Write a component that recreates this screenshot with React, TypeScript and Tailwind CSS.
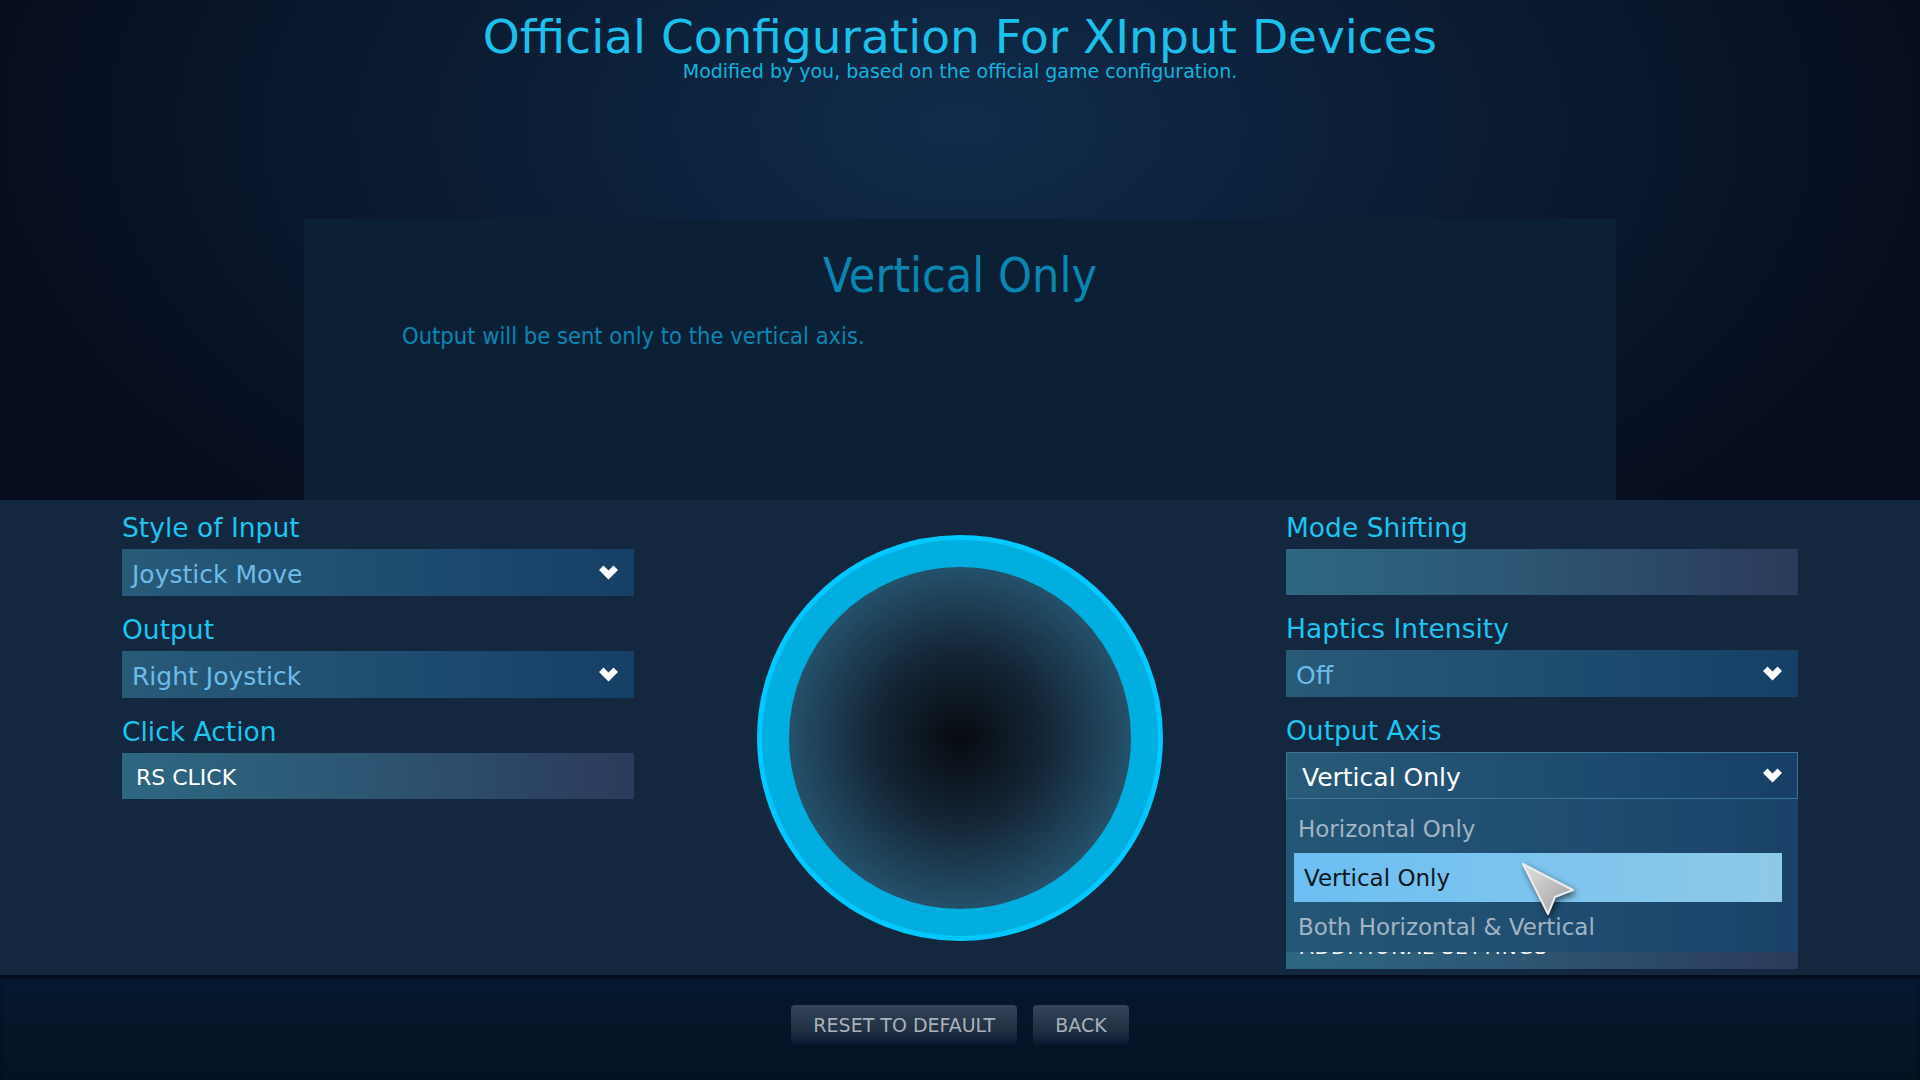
import React from 'react';

const sans = "font-['DejaVu_Sans',Verdana,sans-serif]";
const cond = "font-['DejaVu_Sans_Condensed','DejaVu_Sans',sans-serif]";

function Chevron() {
  return (
    <svg width="19" height="15" viewBox="0 0 19 15" className="shrink-0">
      <polygon points="0,5 4.5,0.5 9.5,5.5 14.5,0.5 19,5 9.5,14.5" fill="#ffffff" />
    </svg>
  );
}

function Cursor() {
  return (
    <svg width="60" height="60" viewBox="-4 -4 60 60" className="drop-shadow-[2px_3px_3px_rgba(0,0,0,0.6)]">
      <defs>
        <linearGradient id="cur" x1="0" y1="0" x2="1" y2="1">
          <stop offset="0" stopColor="#e2e2e2" />
          <stop offset="1" stopColor="#9c9c9c" />
        </linearGradient>
      </defs>
      <path d="M0 0 L50 26 L32 33 L25 50 Z" fill="url(#cur)" stroke="#ececec" strokeWidth="2" strokeLinejoin="round" />
    </svg>
  );
}

function Field({ label, first, children }: { label: string; first?: boolean; children: React.ReactNode }) {
  return (
    <div className={first ? 'flex flex-col' : 'flex flex-col mt-[21px]'}>
      <div className="h-[26px] text-[26.5px] leading-[26px] text-[#1dc5ef] mb-[8px]">{label}</div>
      {children}
    </div>
  );
}

function Select({ value, open }: { value: string; open?: boolean }) {
  return (
    <div
      className={
        open
          ? 'h-[47px] flex items-center justify-between pl-[15px] pr-[15px] border border-[#3a7797] bg-[linear-gradient(to_right,#295a78,#1d4b6f_60%,#173f66)]'
          : 'h-[47px] flex items-center justify-between pl-[10px] pr-[16px] bg-[linear-gradient(to_right,#295a78,#1d4b6f_60%,#163f66)]'
      }
    >
      <span className={open ? 'pt-[5px] text-[25px] text-white' : 'pt-[5px] text-[25px] text-[#6cbcea]'}>{value}</span>
      <Chevron />
    </div>
  );
}

function Plain({ value }: { value?: string }) {
  return (
    <div className="h-[46px] flex items-center pl-[14px] bg-[linear-gradient(to_right,#2d6781,#2d5774_45%,#2c3a5b)]">
      {value && <span className="pt-[2px] text-[22px] text-white">{value}</span>}
    </div>
  );
}

export default function App() {
  return (
    <div className={`${sans} w-[1920px] h-[1080px] flex flex-col overflow-hidden bg-[#13273e]`}>
      {/* Header + description */}
      <div className="h-[500px] flex flex-col items-center bg-[radial-gradient(ellipse_1000px_560px_at_50%_25%,#102c4b_0%,#0b1c33_50%,#070d1e_100%)]">
        <h1 className="pt-[13px] text-[47px] leading-[47px] text-[#1cc0ea]">Official Configuration For XInput Devices</h1>
        <p className="mt-[2px] text-[19px] leading-[19px] text-[#13b3dc]">
          Modified by you, based on the official game configuration.
        </p>
        <div className="mt-auto w-[1312px] h-[281px] bg-[#0b2035] flex flex-col pt-[32px]">
          <h2 className={`${cond} text-center text-[48px] leading-[48px] text-[#0a86b1]`}>Vertical Only</h2>
          <p className={`${cond} mt-[25px] pl-[98px] text-[23.5px] leading-[24px] text-[#0a86b1]`}>
            Output will be sent only to the vertical axis.
          </p>
        </div>
      </div>

      {/* Settings */}
      <div className="h-[475px] flex justify-between px-[122px] bg-[#13273e]">
        <div className="w-[512px] pt-[15px] flex flex-col">
          <Field label="Style of Input" first>
            <Select value="Joystick Move" />
          </Field>
          <Field label="Output">
            <Select value="Right Joystick" />
          </Field>
          <Field label="Click Action">
            <Plain value="RS CLICK" />
          </Field>
        </div>

        <div className="self-center w-[406px] h-[406px] rounded-full bg-[#00afdf] border-[5px] border-[#00c9ff] flex items-center justify-center">
          <div className="w-[342px] h-[342px] rounded-full bg-[radial-gradient(circle,#070b10_0%,#142536_35%,#24506a_70%,#30697f_100%)]" />
        </div>

        <div className="w-[512px] pt-[15px] flex flex-col">
          <Field label="Mode Shifting" first>
            <Plain />
          </Field>
          <Field label="Haptics Intensity">
            <Select value="Off" />
          </Field>
          <Field label="Output Axis">
            <div className="relative">
              <Select value="Vertical Only" open />
              <div className="absolute z-10 left-0 right-0 top-full h-[153px] pt-[5px] pl-[8px] pr-[16px] flex flex-col bg-[linear-gradient(to_right,#245675,#1f4c70_60%,#1a4268)]">
                <div className="h-[49px] flex items-center px-[4px] pt-[2px] text-[23px] text-[#a1b4c4]">Horizontal Only</div>
                <div className="h-[49px] flex items-center px-[10px] pt-[2px] text-[23px] text-[#0e1720] bg-[linear-gradient(to_right,#6bbff2,#7fc5ee_55%,#8ec9e7)]">
                  Vertical Only
                </div>
                <div className="h-[49px] flex items-center px-[4px] pt-[2px] text-[23px] text-[#a1b4c4]">Both Horizontal &amp; Vertical</div>
                <div className="absolute left-[237px] top-[65px] -ml-[4px] -mt-[4px]">
                  <Cursor />
                </div>
              </div>
            </div>
          </Field>
          <div className="mt-[126px] h-[44px] flex items-center pl-[14px] bg-[linear-gradient(to_right,#2d6781,#2d5774_45%,#2c3a5b)]">
            <span className="text-[20px] text-white tracking-[1px]">ADDITIONAL SETTINGS</span>
          </div>
        </div>
      </div>

      {/* Footer */}
      <div className="flex-1 flex justify-center gap-[16px] pt-[30px] bg-[linear-gradient(to_bottom,#061831,#051527_60%,#041322)] shadow-[inset_0_3px_3px_rgba(0,0,0,0.45)]">
        <button className="h-[40px] px-[22px] rounded-[4px] text-[19px] text-[#a9b1b9] bg-[linear-gradient(to_bottom,#34445a,#202f42_65%,#061831)]">
          RESET TO DEFAULT
        </button>
        <button className="h-[40px] px-[22px] rounded-[4px] text-[19px] text-[#a9b1b9] bg-[linear-gradient(to_bottom,#34445a,#202f42_65%,#061831)]">
          BACK
        </button>
      </div>
    </div>
  );
}
